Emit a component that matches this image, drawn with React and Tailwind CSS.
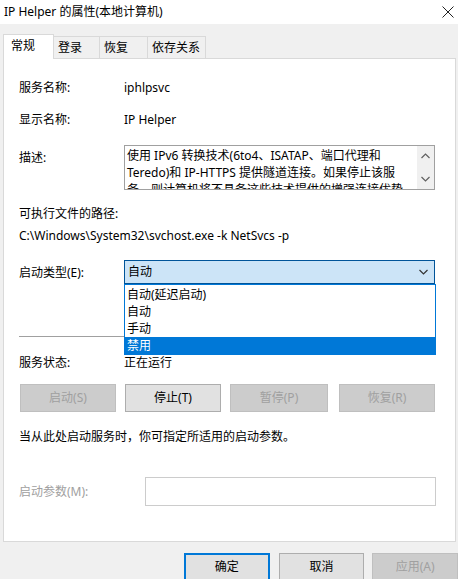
import React from 'react';

const font = "font-['Segoe_UI','Noto_Sans','Noto_Sans_CJK_SC',sans-serif]";

function Chevron({ up, className }) {
  return (
    <svg className={className} width="9" height="6" viewBox="0 0 9 6" fill="none" stroke="currentColor" strokeWidth="1.2">
      {up ? <path d="M0.5 5L4.5 1L8.5 5" /> : <path d="M0.5 1L4.5 5L8.5 1" />}
    </svg>
  );
}

export default function App() {
  const tabs = ['登录', '恢复', '依存关系'];
  const tabWidths = ['w-[46px]', 'w-[48px]', 'w-[58px]'];

  return (
    <div className={`w-[458px] h-[579px] overflow-hidden bg-[#f0f0f0] text-[12px] leading-[16px] text-black ${font}`}>
      {/* title bar */}
      <div className="h-[24px] bg-white flex items-center justify-between pl-[4px] pr-[2px]">
        <span className="text-[12px]">IP Helper 的属性(本地计算机)</span>
        <svg width="12" height="12" viewBox="0 0 12 12" className="mr-[2px]" stroke="#222" strokeWidth="1">
          <path d="M0.5 0.5L11.5 11.5M11.5 0.5L0.5 11.5" />
        </svg>
      </div>

      {/* tabs */}
      <div className="pt-[10px] pl-[3px] flex items-end h-[34px] relative z-10">
        <div className="w-[51px] h-[25px] bg-white border border-b-0 border-[#d9d9d9] pl-[7px] pt-[3px] -mb-[1px]">常规</div>
        {tabs.map((t, i) => (
          <div key={t} className={`${tabWidths[i]} h-[22px] border border-l-0 border-b-0 border-[#d9d9d9] pl-[4px] pt-[3px]`}>
            {t}
          </div>
        ))}
      </div>

      {/* panel */}
      <div className="ml-[3px] w-[453px] h-[484px] bg-white border border-[#d9d9d9] pl-[15px] pr-[19px] relative">
        <div className="flex mt-[21px]">
          <div className="w-[105px]">服务名称:</div>
          <div>iphlpsvc</div>
        </div>
        <div className="flex mt-[16px]">
          <div className="w-[105px]">显示名称:</div>
          <div>IP Helper</div>
        </div>
        <div className="flex mt-[17px]">
          <div className="w-[105px] pt-[5px]">描述:</div>
          <div className="w-[311px] h-[45px] border border-[#a0a0a0] flex overflow-hidden">
            <div className="flex-1 pl-[2px] pr-[2px] pt-[1px] leading-[17px] overflow-hidden">
              使用 IPv6 转换技术(6to4、ISATAP、端口代理和 Teredo)和 IP-HTTPS 提供隧道连接。如果停止该服务，则计算机将不具备这些技术提供的增强连接优势。
            </div>
            <div className="w-[17px] bg-[#f0f0f0] flex flex-col items-center justify-between py-[7px] text-[#606060]">
              <Chevron up />
              <Chevron />
            </div>
          </div>
        </div>
        <div className="mt-[16px]">可执行文件的路径:</div>
        <div className="mt-[6px]">C:\Windows\System32\svchost.exe -k NetSvcs -p</div>

        <div className="flex mt-[16px] relative">
          <div className="w-[105px] pt-[5px]">启动类型(E):</div>
          <div className="w-[311px] h-[24px] bg-[#cce4f7] border border-[#005499] flex items-center justify-between pl-[3px] pr-[6px]">
            <span>自动</span>
            <Chevron className="text-[#333]" />
          </div>
          <div className="absolute left-[105px] top-[24px] w-[312px] bg-white border border-[#0078d7] z-20">
            <div className="h-[18px] pl-[2px] pt-[2px]">自动(延迟启动)</div>
            <div className="h-[17px] pl-[2px] pt-[1px]">自动</div>
            <div className="h-[17px] pl-[2px] pt-[1px]">手动</div>
            <div className="h-[17px] pl-[2px] pt-[1px] bg-[#0078d7] text-white">禁用</div>
          </div>
        </div>

        <div className="mt-[52px] h-px bg-[#a0a0a0]" />

        <div className="flex mt-[18px]">
          <div className="w-[105px]">服务状态:</div>
          <div>正在运行</div>
        </div>

        <div className="flex mt-[13px] h-[28px]">
          <div className="ml-[1px] w-[96px] bg-[#cccccc] border border-[#bfbfbf] text-[#a0a0a0] flex items-center justify-center">启动(S)</div>
          <div className="ml-[9px] w-[96px] bg-[#e1e1e1] border border-[#adadad] flex items-center justify-center">停止(T)</div>
          <div className="ml-[9px] w-[98px] bg-[#cccccc] border border-[#bfbfbf] text-[#a0a0a0] flex items-center justify-center">暂停(P)</div>
          <div className="ml-[11px] w-[96px] bg-[#cccccc] border border-[#bfbfbf] text-[#a0a0a0] flex items-center justify-center">恢复(R)</div>
        </div>

        <div className="mt-[17px]">当从此处启动服务时，你可指定所适用的启动参数。</div>

        <div className="flex items-center mt-[32px]">
          <div className="w-[126px] text-[#a0a0a0]">启动参数(M):</div>
          <div className="w-[291px] h-[29px] border border-[#cccccc] bg-white" />
        </div>
      </div>

      {/* bottom buttons */}
      <div className="flex mt-[11px] h-[28px]">
        <div className="ml-[184px] w-[86px] bg-[#e1e1e1] border-2 border-[#0078d7] flex items-center justify-center">确定</div>
        <div className="ml-[9px] w-[86px] bg-[#e1e1e1] border border-[#adadad] flex items-center justify-center">取消</div>
        <div className="ml-[8px] w-[86px] bg-[#cccccc] border border-[#bfbfbf] text-[#a0a0a0] flex items-center justify-center">应用(A)</div>
      </div>
    </div>
  );
}
